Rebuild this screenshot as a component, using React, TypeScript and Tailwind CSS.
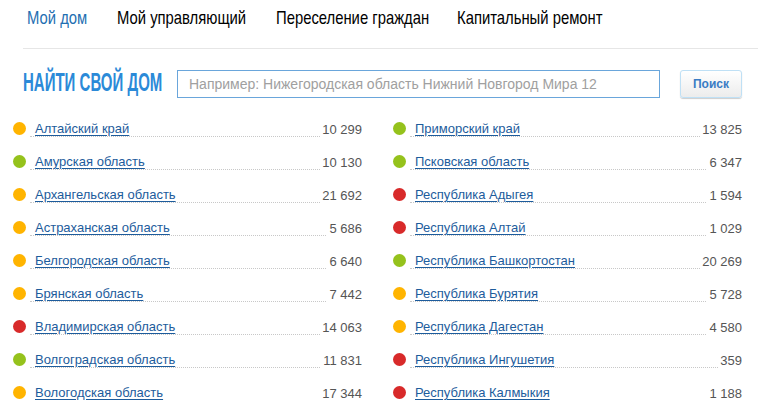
import React from "react";

type Row = { name: string; n: string; c: "o" | "g" | "r" };

const left: Row[] = [
  { name: "Алтайский край", n: "10 299", c: "o" },
  { name: "Амурская область", n: "10 130", c: "g" },
  { name: "Архангельская область", n: "21 692", c: "o" },
  { name: "Астраханская область", n: "5 686", c: "o" },
  { name: "Белгородская область", n: "6 640", c: "o" },
  { name: "Брянская область", n: "7 442", c: "o" },
  { name: "Владимирская область", n: "14 063", c: "r" },
  { name: "Волгоградская область", n: "11 831", c: "g" },
  { name: "Вологодская область", n: "17 344", c: "o" },
];

const right: Row[] = [
  { name: "Приморский край", n: "13 825", c: "g" },
  { name: "Псковская область", n: "6 347", c: "g" },
  { name: "Республика Адыгея", n: "1 594", c: "r" },
  { name: "Республика Алтай", n: "1 029", c: "r" },
  { name: "Республика Башкортостан", n: "20 269", c: "g" },
  { name: "Республика Бурятия", n: "5 728", c: "o" },
  { name: "Республика Дагестан", n: "4 580", c: "o" },
  { name: "Республика Ингушетия", n: "359", c: "r" },
  { name: "Республика Калмыкия", n: "1 188", c: "r" },
];

function Dot({ c }: { c: Row["c"] }) {
  const cls =
    c === "o" ? "bg-[#ffb400]" : c === "g" ? "bg-[#95c21c]" : "bg-[#d82a2a]";
  return <span className={`w-[13px] h-[13px] rounded-full shrink-0 ${cls}`} />;
}

function Column({ rows }: { rows: Row[] }) {
  return (
    <div className="flex flex-col w-[349px]">
      {rows.map((r) => (
        <div key={r.name} className="h-[33px] flex items-center">
          <Dot c={r.c} />
          <div className="ml-[4px] flex-1 flex items-end justify-between h-[17px] border-b border-dotted border-[#c8c8c8]">
            <a
              href="#"
              className="ml-[5px] text-[13px] leading-[15px] text-[#1d5c9c] underline underline-offset-2 decoration-[#1d5c9c] whitespace-nowrap"
            >
              {r.name}
            </a>
            <span className="bg-white pl-[2px] text-[13px] leading-[15px] text-[#555] translate-y-[1px] whitespace-nowrap">
              {r.n}
            </span>
          </div>
        </div>
      ))}
    </div>
  );
}

function NavItem({ w, active, children }: { w: string; active?: boolean; children: React.ReactNode }) {
  return (
    <div className={`${w} shrink-0`}>
      <span
        className={`inline-block whitespace-nowrap origin-left scale-x-[0.78] ${
          active ? "text-[#1f6fb2]" : "text-black"
        }`}
      >
        {children}
      </span>
    </div>
  );
}

export default function App() {
  return (
    <div
      className="w-[758px] h-[400px] overflow-hidden bg-white"
      style={{ fontFamily: "Arial, 'Liberation Sans', sans-serif" }}
    >
      <nav className="flex items-center h-[36px] pl-[27px] text-[19px]">
        <NavItem w="w-[90px]" active>
          Мой дом
        </NavItem>
        <NavItem w="w-[159px]">Мой управляющий</NavItem>
        <NavItem w="w-[181px]">Переселение граждан</NavItem>
        <NavItem w="w-[200px]">Капитальный ремонт</NavItem>
      </nav>
      <div className="ml-[23px] mt-[12px] border-t border-[#e6e6e6]" />
      <div className="flex items-center h-[28px] mt-[21px] pl-[23px]">
        <div className="w-[154px] shrink-0">
          <h1 className="inline-block whitespace-nowrap origin-left scale-x-[0.6] text-[25px] font-bold text-[#2b8ad8] leading-none">
            НАЙТИ СВОЙ ДОМ
          </h1>
        </div>
        <input
          className="w-[483px] h-[28px] border border-[#6aa6db] px-[11px] text-[14px] text-[#333] placeholder:text-[#a0a0a0] outline-none"
          placeholder="Например: Нижегородская область Нижний Новгород Мира 12"
        />
        <button className="ml-[20px] w-[62px] h-[28px] rounded-[3px] border border-[#bfe0f5] bg-gradient-to-b from-white to-[#ececec] shadow-[0_1px_1px_rgba(0,0,0,0.2)] text-[12px] font-bold text-[#3a7cc4]">
          Поиск
        </button>
      </div>
      <div className="flex mt-[14px] pl-[13px] gap-[31px]">
        <Column rows={left} />
        <Column rows={right} />
      </div>
    </div>
  );
}
